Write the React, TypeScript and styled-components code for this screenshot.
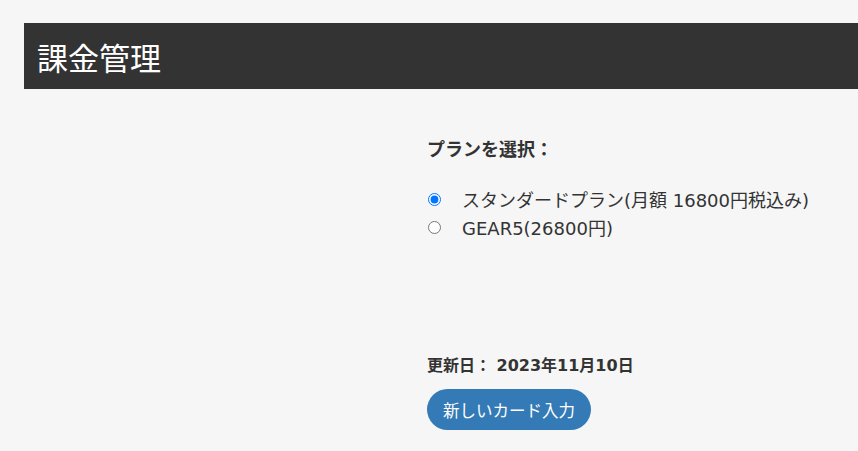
import React, { useState } from "react";
import styled, { createGlobalStyle } from "styled-components";

const Global = createGlobalStyle`
  html, body {
    margin: 0;
    padding: 0;
    background: #f6f6f6;
  }
  body {
    font-family: "DejaVu Sans", "Noto Sans CJK JP", sans-serif;
    color: #333333;
  }
`;

const Page = styled.div`
  padding: 23px 0 0 24px;
`;

const Header = styled.header`
  height: 66px;
  background: #333333;
  display: flex;
  align-items: center;
  padding-left: 13px;
`;

const Title = styled.h1`
  margin: 0;
  font-size: 31px;
  font-weight: 400;
  color: #ffffff;
  font-family: "Noto Sans CJK JP", sans-serif;
`;

const Main = styled.main`
  padding-left: 403px;
  padding-top: 49px;
  display: flex;
  flex-direction: column;
`;

const Label = styled.div`
  font-size: 18px;
  font-weight: 700;
  line-height: 24px;
`;

const PlanList = styled.div`
  margin-top: 23px;
  display: flex;
  flex-direction: column;
`;

const PlanRow = styled.label`
  display: flex;
  align-items: center;
  height: 28px;
  font-size: 18px;
  cursor: pointer;
`;

const Radio = styled.input`
  width: 13px;
  height: 13px;
  margin: 0 21px 0 1px;
  accent-color: #0075ff;
`;

const DateLine = styled.div`
  margin-top: 114px;
  font-size: 16px;
  font-weight: 700;
  line-height: 22px;
`;

const Button = styled.button`
  margin-top: 12px;
  align-self: flex-start;
  height: 41px;
  padding: 0 16px;
  border: none;
  border-radius: 21px;
  background: #337ab7;
  color: #ffffff;
  font-family: inherit;
  font-size: 16.5px;
  cursor: pointer;
`;

const plans = [
  { id: "standard", label: "スタンダードプラン(月額 16800円税込み)" },
  { id: "gear5", label: "GEAR5(26800円)" },
];

export default function App() {
  const [plan, setPlan] = useState("standard");
  return (
    <>
      <Global />
      <Page>
        <Header>
          <Title>課金管理</Title>
        </Header>
        <Main>
          <Label>プランを選択：</Label>
          <PlanList>
            {plans.map((p) => (
              <PlanRow key={p.id}>
                <Radio
                  type="radio"
                  name="plan"
                  checked={plan === p.id}
                  onChange={() => setPlan(p.id)}
                />
                {p.label}
              </PlanRow>
            ))}
          </PlanList>
          <DateLine>更新日： 2023年11月10日</DateLine>
          <Button>新しいカード入力</Button>
        </Main>
      </Page>
    </>
  );
}
